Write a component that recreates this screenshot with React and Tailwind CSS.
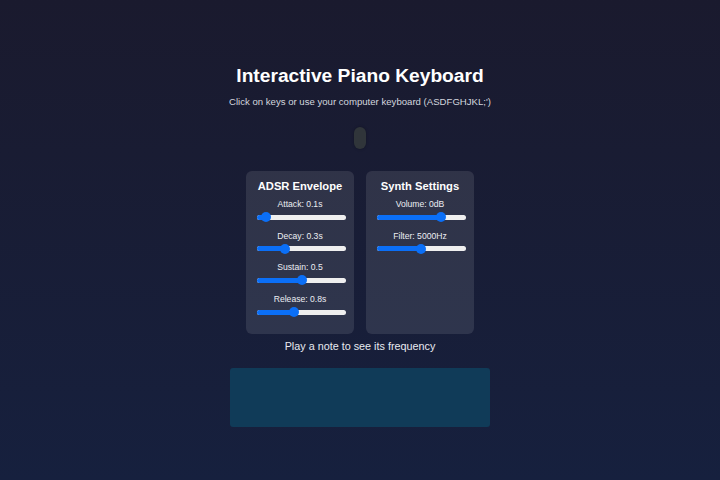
import { useState } from "react";

const font = { fontFamily: '"Liberation Sans", Arial, sans-serif' };

function Slider({ label, value, min, max }) {
  const pct = (value - min) / (max - min);
  return (
    <div className="flex flex-col items-center">
      <span className="text-[8.6px] leading-[10px] text-[#eceef3]">{label}</span>
      <div className="relative ml-[3px] mt-[3px] h-[10px] w-[89px]">
        <div className="absolute left-0 right-0 top-[2.5px] h-[5px] rounded-full bg-[#efefef]" />
        <div
          className="absolute left-0 top-[2.5px] h-[5px] rounded-full bg-[#0b6ff7]"
          style={{ width: `${5 + pct * 79}px` }}
        />
        <div
          className="absolute top-0 h-[10px] w-[10px] rounded-full bg-[#0b6ff7]"
          style={{ left: `${pct * 79}px` }}
        />
      </div>
    </div>
  );
}

function Panel({ title, children }) {
  return (
    <div className="flex w-[108px] flex-col rounded-md bg-white/10 px-[9px] pb-[17px] pt-[9px]">
      <h3 className="text-center text-[11.2px] font-bold leading-[13px] text-white">{title}</h3>
      <div className="mt-[6px] flex flex-col gap-[8.7px]">{children}</div>
    </div>
  );
}

export default function App() {
  const [note] = useState(null);

  return (
    <div
      className="flex min-h-[480px] w-full flex-col items-center bg-linear-to-b from-[#1a1a2e] to-[#16203e] pt-[64px]"
      style={font}
    >
      <h1 className="text-[19.2px] font-bold leading-[24px] text-white">Interactive Piano Keyboard</h1>
      <p className="mt-[7px] text-[9.6px] leading-[14px] text-[#d3d6df]">
        Click on keys or use your computer keyboard (ASDFGHJKL;')
      </p>

      <div className="mt-[18px] h-[22px] w-3 rounded-full bg-[#30353a] shadow-[0_0_3px_rgba(0,0,0,0.3)]" />

      <div className="mt-[22px] flex gap-3">
        <Panel title="ADSR Envelope">
          <Slider label="Attack: 0.1s" value={0.1} min={0.01} max={2} />
          <Slider label="Decay: 0.3s" value={0.3} min={0.01} max={1} />
          <Slider label="Sustain: 0.5" value={0.5} min={0} max={1} />
          <Slider label="Release: 0.8s" value={0.8} min={0} max={2} />
        </Panel>
        <Panel title="Synth Settings">
          <Slider label="Volume: 0dB" value={0} min={-30} max={10} />
          <Slider label="Filter: 5000Hz" value={5000} min={100} max={10000} />
        </Panel>
      </div>

      <p className="mt-[5px] text-[10.8px] leading-[14px] text-[#e8eaf0]">
        {note ? `Frequency: ${note}` : "Play a note to see its frequency"}
      </p>

      <div className="mt-[15px] h-[59px] w-[260px] rounded-[3px] bg-[#103b58]" />
    </div>
  );
}
